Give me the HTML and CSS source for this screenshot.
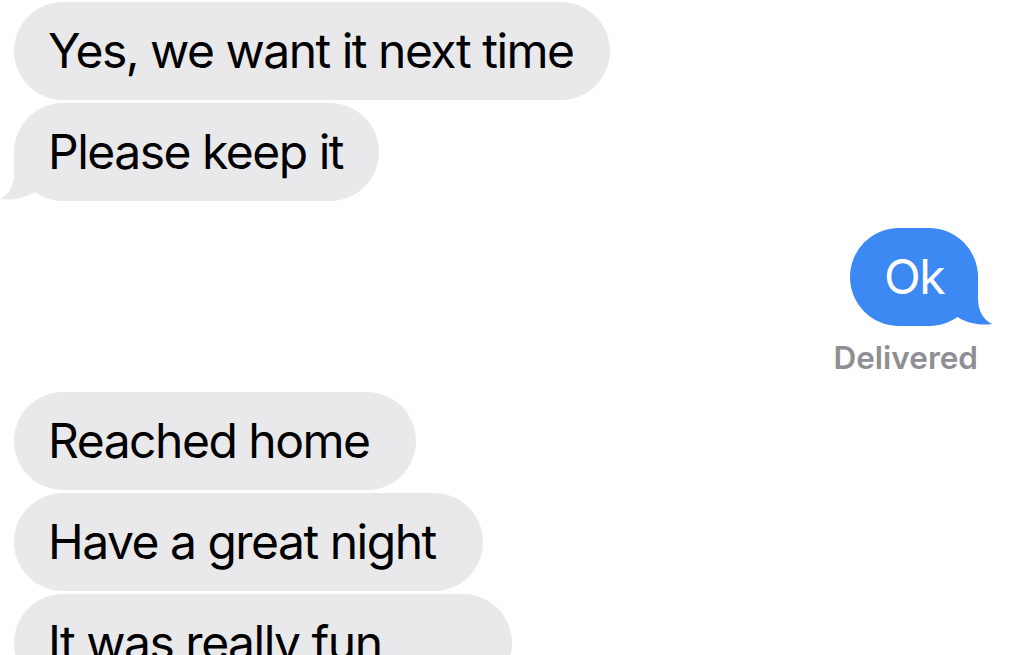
FILE: index.html
```html
<!DOCTYPE html>
<html lang="en">
<head>
  <meta charset="UTF-8">
  <title>Messages</title>
  <link rel="stylesheet" href="styles.css">
</head>
<body>

  <div class="thread">
    <div class="group">
      <div class="msg them">Yes, we want it next time</div>
      <div class="msg them last">
        Please keep it
        <svg class="tail tail-left" width="44" height="50" viewBox="0 0 44 50"><path d="M14 0 L14 22 C14 36 8 44 0 48 C12 50 26 47 36 40 L44 0 Z" fill="#e9e9eb"/></svg>
      </div>
    </div>

    <div class="group sent">
      <div class="msg me last">
        Ok
        <svg class="tail tail-right" width="44" height="50" viewBox="0 0 44 50"><path d="M30 0 L30 22 C30 36 36 44 44 48 C32 50 18 47 8 40 L0 0 Z" fill="#3d89f4"/></svg>
      </div>
      <div class="status">Delivered</div>
    </div>

    <div class="group later">
      <div class="msg them">Reached home</div>
      <div class="msg them">Have a great night</div>
      <div class="msg them wide">It was really fun</div>
    </div>
  </div>

</body>
</html>
```

FILE: styles.css
```css
html, body {
  margin: 0;
  height: 100%;
  overflow: hidden;
  background: #fff;
}

body {
  font-family: Inter, "Noto Sans", sans-serif;
}

.thread {
  display: flex;
  flex-direction: column;
  padding: 2px 46px 0 14px;
}

.group {
  display: flex;
  flex-direction: column;
  gap: 3px;
}

.sent {
  margin-top: 27px;
}

.msg {
  position: relative;
  font-size: 48px;
  line-height: 58px;
  letter-spacing: -1.5px;
  padding: 20px 36px 20px 34px;
  border-radius: 49px;
  max-width: 760px;
}

.them {
  align-self: flex-start;
  background: #e9e9eb;
  color: #000;
}

.later .msg {
  padding-right: 47px;
}

.later .wide {
  min-width: 417px;
}

.me {
  align-self: flex-end;
  background: #3d89f4;
  color: #fff;
  padding-right: 34px;
}

.tail {
  position: absolute;
  bottom: 0;
}

.tail-left {
  left: -14px;
}

.tail-right {
  right: -14px;
}

.status {
  align-self: flex-end;
  font-size: 31.5px;
  line-height: 34px;
  font-weight: 600;
  color: #8e8e93;
  margin: 12px 0 17px;
}
```
